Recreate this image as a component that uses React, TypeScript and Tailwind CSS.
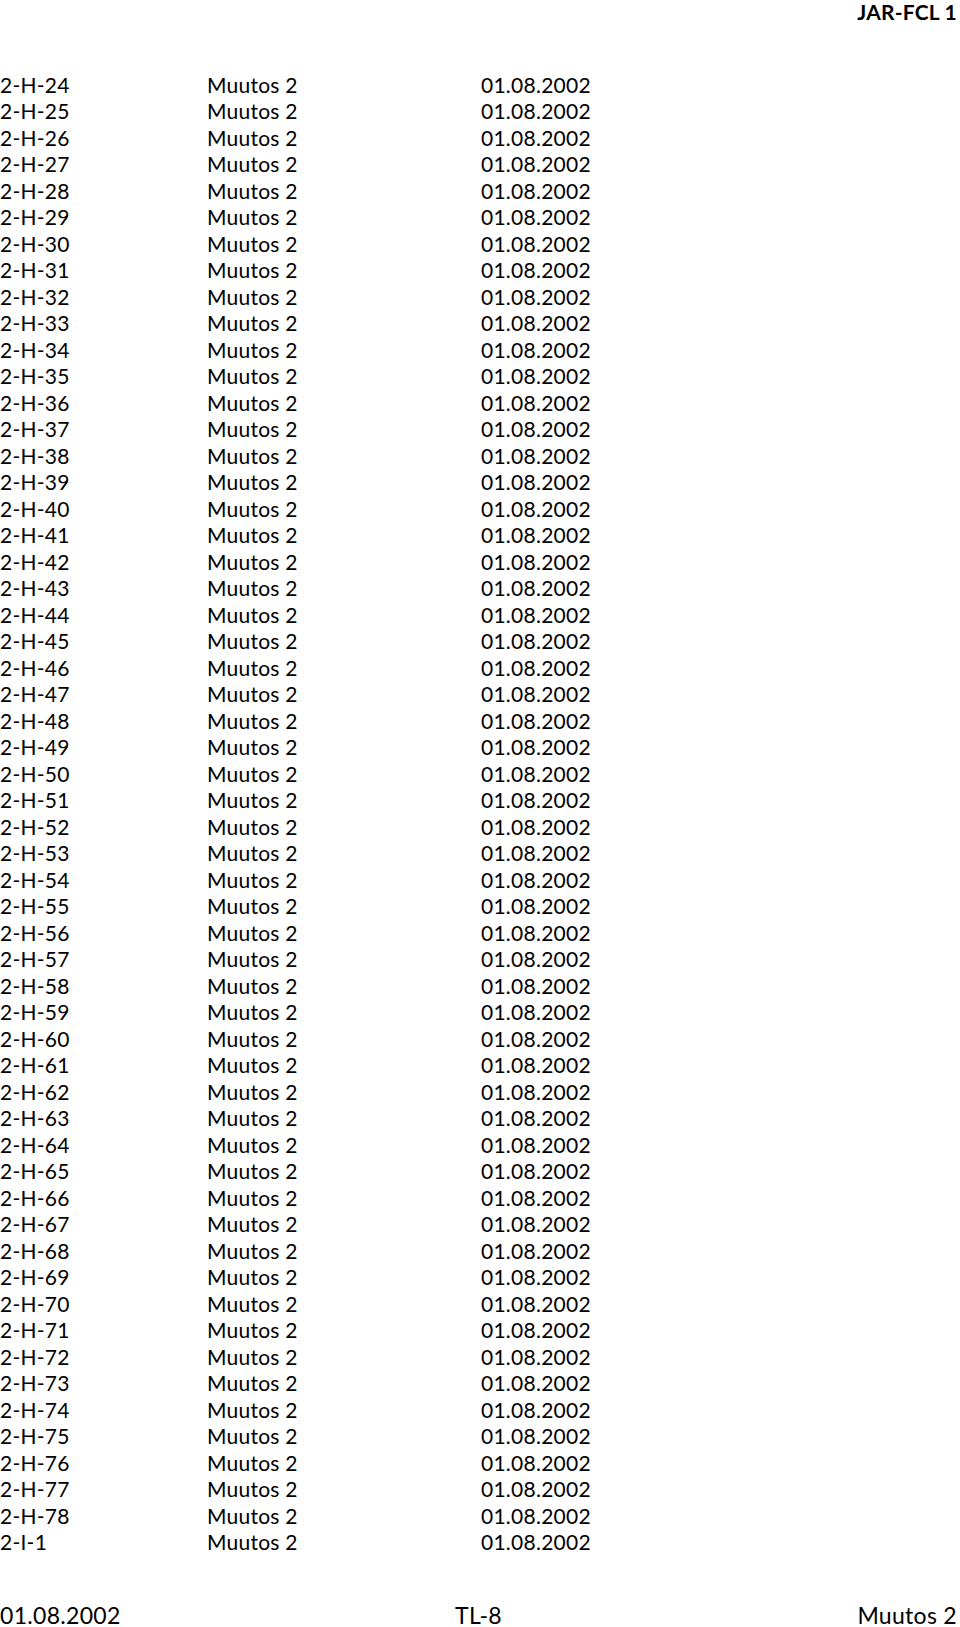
import React from "react";

const rows: string[] = [];
for (let i = 24; i <= 78; i++) rows.push(`2-H-${i}`);
rows.push("2-I-1");

export default function App() {
  return (
    <div className="w-[960px] h-[1627px] bg-white text-black flex flex-col" style={{ fontFamily: "Lato, 'Open Sans', sans-serif" }}>
      <div className="flex justify-end pr-[3px] h-[24px] items-center">
        <span className="font-bold text-[21px] leading-[24px] tracking-[0.2px]">JAR-FCL 1</span>
      </div>
      <div className="pt-[47.75px] flex flex-col">
        {rows.map((r) => (
          <div key={r} className="flex h-[26.5px] items-center text-[21px] leading-[26.5px] tracking-[0.25px]">
            <span className="w-[207px]">{r}</span>
            <span className="w-[274px]">Muutos 2</span>
            <span>01.08.2002</span>
          </div>
        ))}
      </div>
      <div className="mt-auto grid grid-cols-3 items-center pr-[3px] h-[24px] mb-[0px] text-[23px] leading-[24px] tracking-[0.3px]">
        <span>01.08.2002</span>
        <span className="text-center">TL-8</span>
        <span className="text-right">Muutos 2</span>
      </div>
    </div>
  );
}
